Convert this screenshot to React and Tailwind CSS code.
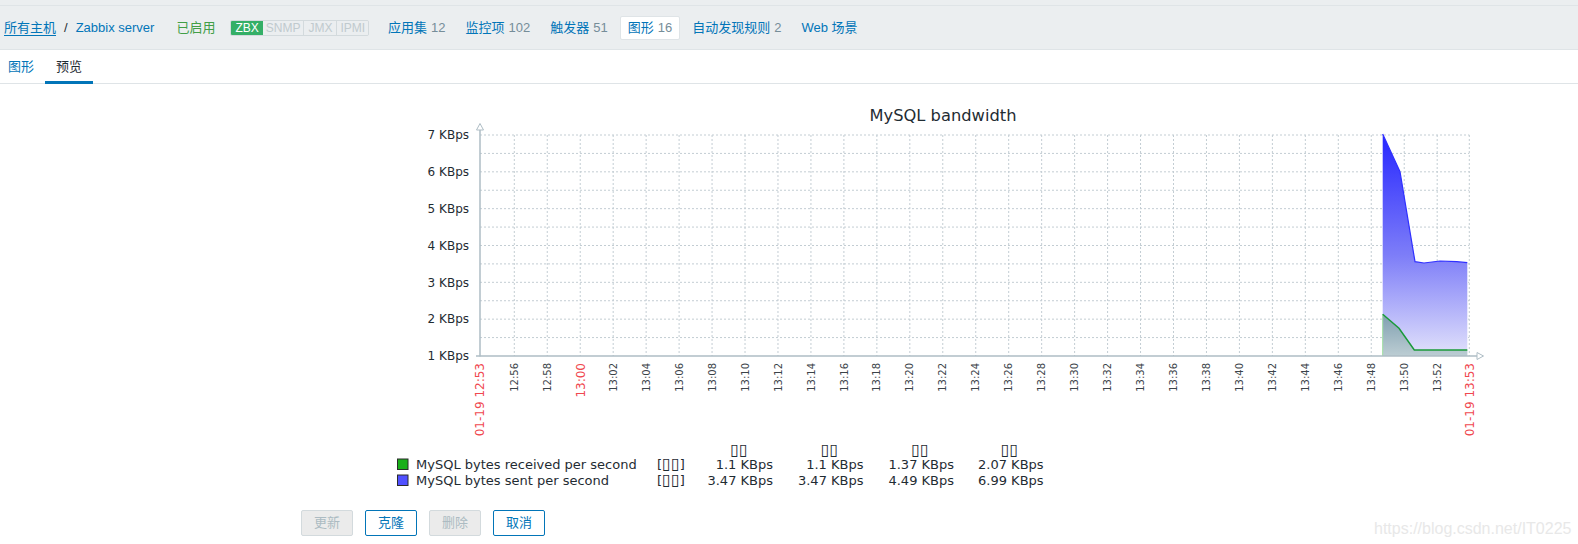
import React from "react";

const navFont = { fontFamily: '"Liberation Sans", "Noto Sans CJK SC", sans-serif' };

const gridX = Array.from({ length: 29 }, (_, n) => 514.3 + n * 32.96);
const gridY = Array.from({ length: 12 }, (_, k) => 135 + k * 18.415);
const yLabels = ["7 KBps", "6 KBps", "5 KBps", "4 KBps", "3 KBps", "2 KBps", "1 KBps"];

const timeLabel = (n) => {
  const m = 12 * 60 + 56 + 2 * n;
  const hh = String(Math.floor(m / 60)).padStart(2, "0");
  const mm = String(m % 60).padStart(2, "0");
  return `${hh}:${mm}`;
};

const legend = [
  { name: "MySQL bytes received per second", color: "#1aaf1a", vals: ["1.1 KBps", "1.1 KBps", "1.37 KBps", "2.07 KBps"] },
  { name: "MySQL bytes sent per second", color: "#5050ff", vals: ["3.47 KBps", "3.47 KBps", "4.49 KBps", "6.99 KBps"] },
];
const valX = [773, 863.5, 954, 1043.6];

const NavItem = ({ label, count, active }) => (
  <div
    className={
      "px-[7px] h-[24px] flex items-center rounded-[2px] border " +
      (active ? "bg-white border-[#dfe4e7]" : "border-transparent")
    }
  >
    <span className="text-[#0275b8]">{label}</span>
    {count && <span className="text-[#768d99] ml-[4px]">{count}</span>}
  </div>
);

const Graph = () => (
  <svg width="1578" height="400" className="block" style={{ fontFamily: '"DejaVu Sans", sans-serif' }}>
    <defs>
      <linearGradient id="blueFill" x1="0" y1="134" x2="0" y2="356" gradientUnits="userSpaceOnUse">
        <stop offset="0" stopColor="#2626ff" />
        <stop offset="0.55" stopColor="#7e7ef8" />
        <stop offset="1" stopColor="#e2e2fb" />
      </linearGradient>
      <linearGradient id="greenFill" x1="0" y1="314" x2="0" y2="356" gradientUnits="userSpaceOnUse">
        <stop offset="0" stopColor="#7f9fb0" />
        <stop offset="1" stopColor="#bccdd3" />
      </linearGradient>
    </defs>
    <g transform="translate(0,-95)">
      <text x="943" y="120.5" textAnchor="middle" fontSize="16.3" fill="#1f2c33">
        MySQL bandwidth
      </text>

      {gridY.map((y) => (
        <line key={y} x1="480" x2="1469.3" y1={y} y2={y} stroke="#c3cdd3" strokeDasharray="2 2" />
      ))}
      {[...gridX, 1469.3].map((x) => (
        <line key={x} x1={x} x2={x} y1="135" y2="356" stroke="#c3cdd3" strokeDasharray="2 2" />
      ))}

      <polygon
        points="1382.7,134 1400,171.7 1415,261.7 1424,263 1440,261 1456.7,261.7 1467.3,262.7 1467.3,356 1382.7,356"
        fill="url(#blueFill)"
      />
      <polyline
        points="1382.7,134 1400,171.7 1415,261.7 1424,263 1440,261 1456.7,261.7 1467.3,262.7"
        fill="none"
        stroke="#3030ff"
        strokeWidth="1.2"
      />
      <polygon
        points="1382.7,314.3 1399,328.3 1414.3,350 1467.3,350 1467.3,356 1382.7,356"
        fill="url(#greenFill)"
      />
      <line x1="1382.7" x2="1382.7" y1="314.3" y2="356" stroke="#9fe09f" />
      <polyline
        points="1382.7,314.3 1399,328.3 1414.3,350 1467.3,350"
        fill="none"
        stroke="#1a9a3a"
        strokeWidth="1.5"
      />

      <line x1="480" x2="480" y1="129" y2="356.5" stroke="#aebdc5" strokeWidth="1.5" />
      <polygon points="476.5,130 480,123.5 483.5,130" fill="white" stroke="#aebdc5" />
      <line x1="476" x2="1477" y1="356" y2="356" stroke="#aebdc5" strokeWidth="1.5" />
      <polygon points="1477,352.5 1483.5,356 1477,359.5" fill="white" stroke="#aebdc5" />

      {yLabels.map((t, i) => (
        <text key={t} x="469" y={135 + i * 36.83 + 4.3} textAnchor="end" fontSize="12" fill="#1f2c33">
          {t}
        </text>
      ))}

      {gridX.map((x, n) =>
        n === 2 ? (
          <text key={x} transform={`translate(${x + 4.4},363) rotate(-90)`} textAnchor="end" fontSize="12" fill="#f0484f">
            13:00
          </text>
        ) : (
          <text key={x} transform={`translate(${x + 3.6},363) rotate(-90)`} textAnchor="end" fontSize="10" fill="#3b4349">
            {timeLabel(n)}
          </text>
        )
      )}
      <text transform="translate(484.4,363) rotate(-90)" textAnchor="end" fontSize="12" fill="#f0484f">
        01-19 12:53
      </text>
      <text transform="translate(1473.7,363) rotate(-90)" textAnchor="end" fontSize="12" fill="#f0484f">
        01-19 13:53
      </text>

      {valX.map((x) => (
        <text key={x} x={x - 34} y="455" textAnchor="middle" fontSize="16" fill="#1f2c33">
          ▯▯
        </text>
      ))}
      {legend.map((row, i) => {
        const cy = 464.5 + i * 16;
        return (
          <g key={row.name}>
            <rect x="397.5" y={cy - 5.5} width="10.5" height="10.5" fill={row.color} stroke="#2b2b2b" />
            <text x="416" y={cy + 4.5} fontSize="13" fill="#1f2c33">
              {row.name}
            </text>
            <text x="657" y={cy + 4.5} fontSize="13" fill="#1f2c33">
              [<tspan fontSize="16">▯▯</tspan>]
            </text>
            {row.vals.map((v, j) => (
              <text key={j} x={valX[j]} y={cy + 4.5} textAnchor="end" fontSize="13" fill="#1f2c33">
                {v}
              </text>
            ))}
          </g>
        );
      })}
    </g>
  </svg>
);

const App = () => {
  return (
    <div className="relative w-[1578px] h-[544px] bg-white overflow-hidden text-[13px]" style={navFont}>
      <div className="h-[6px] bg-[#ebeef0] border-b border-[#dfe4e7]" />
      <nav className="h-[44px] bg-[#ebeef0] border-b border-[#dfe4e7] flex items-center pl-[4px]">
        <span className="text-[#0275b8] underline underline-offset-[3px]">所有主机</span>
        <span className="mx-[8px] text-[#1f2c33]">/</span>
        <span className="text-[#0275b8]">Zabbix server</span>
        <span className="ml-[22px] text-[#429e47]">已启用</span>
        <div className="ml-[15px] flex h-[16px] text-[12px] leading-[14px] rounded-[2px] overflow-hidden border border-[#d3dadd]">
          <span className="px-[4px] bg-[#34af67] text-white">ZBX</span>
          <span className="px-[3px] bg-[#ebeef0] text-[#c0cace] border-r border-[#d3dadd]">SNMP</span>
          <span className="px-[4px] bg-[#ebeef0] text-[#c0cace] border-r border-[#d3dadd]">JMX</span>
          <span className="px-[3px] bg-[#ebeef0] text-[#c0cace]">IPMI</span>
        </div>
        <div className="ml-[11px] flex items-center gap-[4px]">
          <NavItem label="应用集" count="12" />
          <NavItem label="监控项" count="102" />
          <NavItem label="触发器" count="51" />
          <NavItem label="图形" count="16" active />
          <NavItem label="自动发现规则" count="2" />
          <NavItem label="Web 场景" />
        </div>
      </nav>
      <div className="h-[34px] border-b border-[#dfe4e7] flex">
        <div className="px-[8px] flex items-center text-[#0275b8]">图形</div>
        <div className="ml-[3px] px-[11px] flex items-center text-[#1f2c33] border-b-[3px] border-[#0275b8] h-[34px] pt-[3px]">
          预览
        </div>
      </div>
      <div className="mt-[11px]">
        <Graph />
      </div>
      <div className="mt-[15px] ml-[301px] flex gap-[12px]">
        <button className="w-[52px] h-[26px] rounded-[2px] border border-[#d3dadd] bg-[#ebebeb] text-[#acbbc2]">更新</button>
        <button className="w-[52px] h-[26px] rounded-[2px] border border-[#0275b8] bg-white text-[#0275b8]">克隆</button>
        <button className="w-[52px] h-[26px] rounded-[2px] border border-[#d3dadd] bg-[#ebebeb] text-[#acbbc2]">删除</button>
        <button className="w-[52px] h-[26px] rounded-[2px] border border-[#0275b8] bg-white text-[#0275b8]">取消</button>
      </div>
      <div className="absolute left-[1374px] top-[517px] text-[16px] text-[#e8e8e8]" style={{ fontFamily: '"Liberation Sans", sans-serif' }}>
        https://blog.csdn.net/IT0225
      </div>
    </div>
  );
};

export default App;
